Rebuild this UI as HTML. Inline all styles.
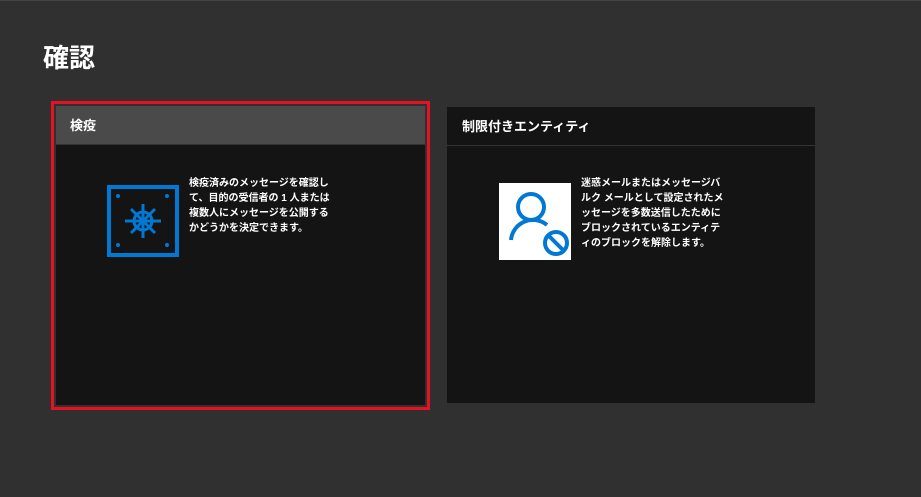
<!DOCTYPE html>
<html><head><meta charset="utf-8"><style>
body{margin:0;width:921px;height:497px;background:#303030;font-family:"Liberation Sans","Noto Sans CJK JP",sans-serif;color:#fff;position:relative;overflow:hidden}
.top{position:absolute;left:0;top:0;width:921px;height:1px;background:#444}
h1{position:absolute;left:43px;top:38px;margin:0;font-size:26px;font-weight:bold}
.red{position:absolute;left:51px;top:101px;width:373px;height:303px;border:3px solid #e81123}
.card{position:absolute;background:#141414}
.hd{position:absolute;left:0;top:0;right:0;height:39px;border-bottom:1px solid #333;font-size:13px;font-weight:bold;line-height:40px;padding-left:14px;box-sizing:border-box}
.txt{position:absolute;font-size:10px;line-height:15px;font-weight:bold;width:142px}
</style></head><body>
<div class="top"></div>
<h1>確認</h1>
<div class="red"></div>
<div class="card" style="left:56px;top:106px;width:369px;height:299px">
 <div class="hd" style="background:#4a4a4a">検疫</div>
 <svg style="position:absolute;left:51px;top:79px" width="72" height="72" viewBox="0 0 72 72">
  <rect x="2" y="2" width="68" height="68" fill="none" stroke="#0078d4" stroke-width="4"/>
  <g fill="#0078d4"><circle cx="11" cy="11" r="2"/><circle cx="60" cy="11" r="2"/><circle cx="11" cy="60" r="2"/><circle cx="60" cy="60" r="2"/></g>
  <g stroke="#0078d4" stroke-width="3" fill="none"><circle cx="36" cy="36" r="9"/>
  <line x1="36" y1="19" x2="36" y2="53"/><line x1="18" y1="36" x2="54" y2="36"/>
  <line x1="24" y1="24" x2="48" y2="48"/><line x1="48" y1="24" x2="24" y2="48"/></g>
 </svg>
 <div class="txt" style="left:133px;top:70px">検疫済みのメッセージを確認して、目的の受信者の 1 人または複数人にメッセージを公開するかどうかを決定できます。</div>
</div>
<div class="card" style="left:447px;top:107px;width:368px;height:296px">
 <div class="hd" style="padding-left:15px">制限付きエンティティ</div>
 <div style="position:absolute;left:52px;top:76px;width:72px;height:77px;background:#fff">
  <svg width="72" height="77" viewBox="0 0 72 77">
   <g fill="none" stroke="#0078d4" stroke-width="4">
   <circle cx="32" cy="24" r="13"/>
   <path d="M12 57 A22 22 0 0 1 48 42"/>
   <circle cx="57" cy="60" r="11"/><line x1="50" y1="53" x2="64" y2="67"/></g>
  </svg>
 </div>
 <div class="txt" style="left:134px;top:69px;width:146px">迷惑メールまたはメッセージバルク メールとして設定されたメッセージを多数送信したためにブロックされているエンティティのブロックを解除します。</div>
</div>
</body></html>
